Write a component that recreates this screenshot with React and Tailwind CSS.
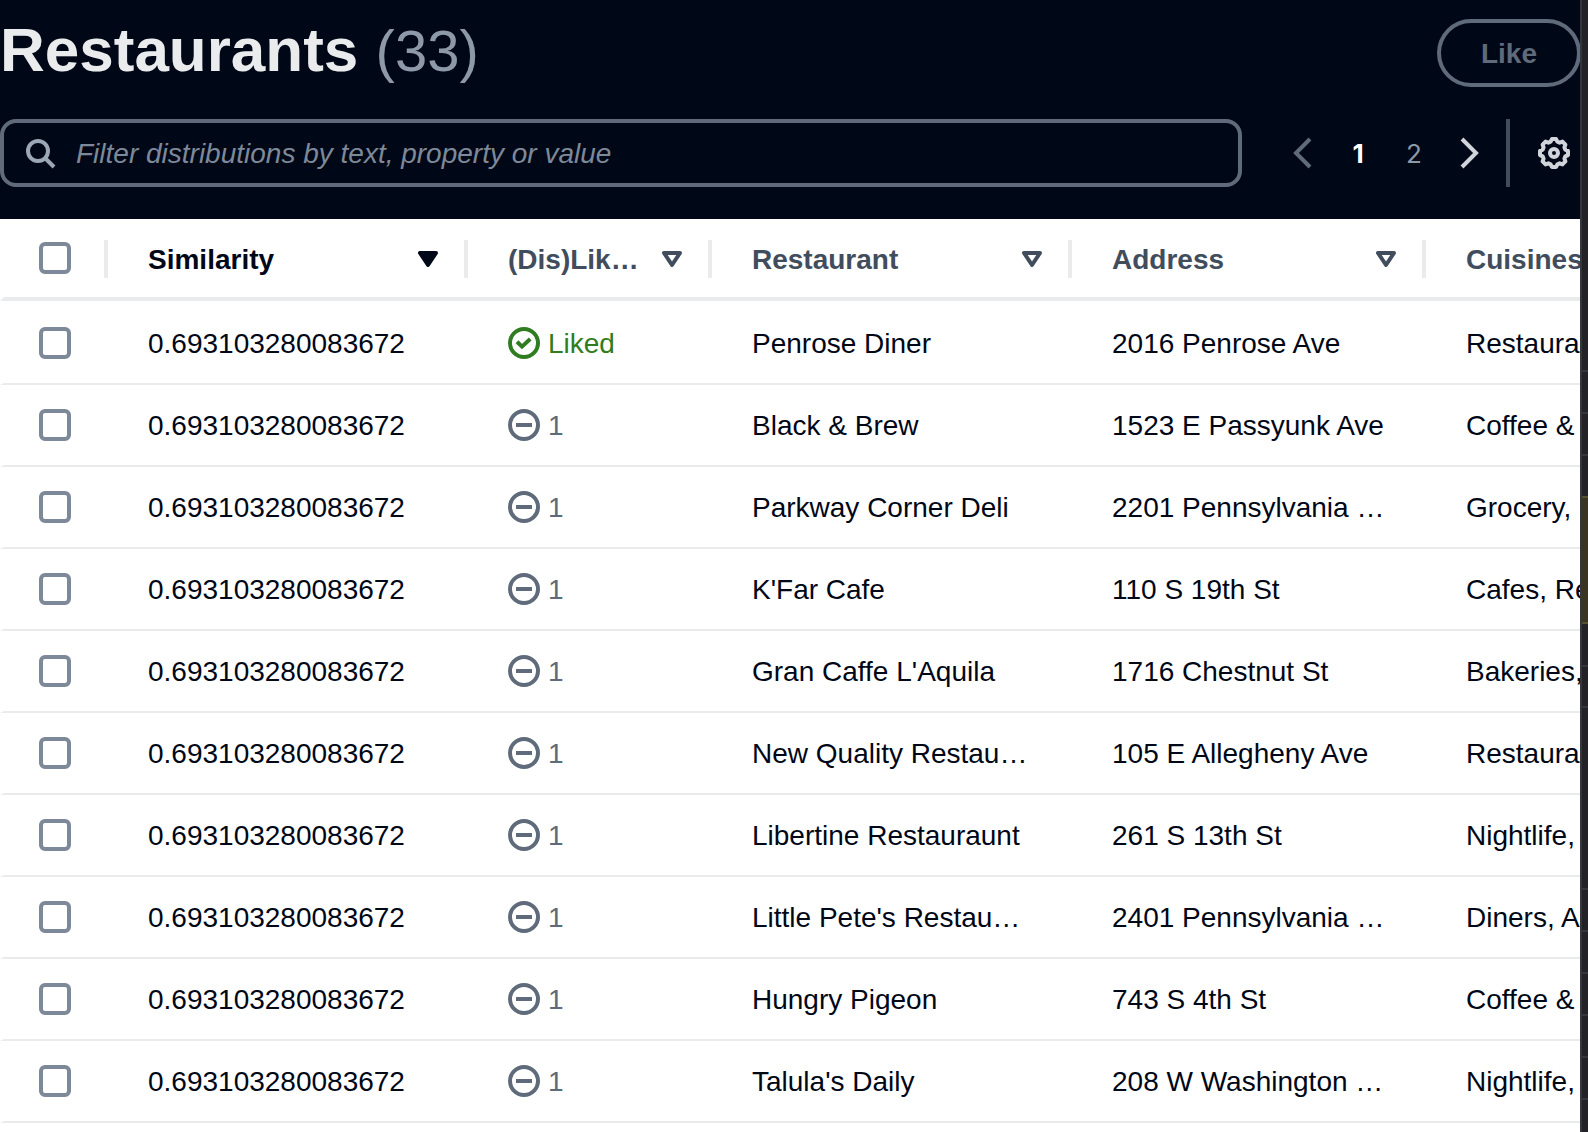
const SANS = "font-['Liberation_Sans',Arial,sans-serif]";

const columns = [
  { label: "Similarity", active: true },
  { label: "(Dis)Lik…" },
  { label: "Restaurant" },
  { label: "Address" },
];

const SCORE = "0.693103280083672";

const rows = [
  { liked: true, name: "Penrose Diner", address: "2016 Penrose Ave", cuisines: "Restaurants" },
  { name: "Black & Brew", address: "1523 E Passyunk Ave", cuisines: "Coffee &" },
  { name: "Parkway Corner Deli", address: "2201 Pennsylvania …", cuisines: "Grocery," },
  { name: "K'Far Cafe", address: "110 S 19th St", cuisines: "Cafes, Res" },
  { name: "Gran Caffe L'Aquila", address: "1716 Chestnut St", cuisines: "Bakeries," },
  { name: "New Quality Restau…", address: "105 E Allegheny Ave", cuisines: "Restaurants" },
  { name: "Libertine Restauraunt", address: "261 S 13th St", cuisines: "Nightlife," },
  { name: "Little Pete's Restau…", address: "2401 Pennsylvania …", cuisines: "Diners, A" },
  { name: "Hungry Pigeon", address: "743 S 4th St", cuisines: "Coffee &" },
  { name: "Talula's Daily", address: "208 W Washington …", cuisines: "Nightlife," },
];

function Icon({ children, className = "" }) {
  return (
    <svg
      viewBox="0 0 16 16"
      fill="none"
      stroke="currentColor"
      strokeWidth="2"
      aria-hidden="true"
      className={`size-8 shrink-0 ${className}`}
    >
      {children}
    </svg>
  );
}

function Checkbox({ label }) {
  return (
    <input
      type="checkbox"
      aria-label={label}
      className="block size-8 appearance-none rounded-md border-4 border-[#7d8998] bg-white checked:bg-[#7d8998]"
    />
  );
}

function SortIcon({ filled }) {
  return (
    <Icon>
      <path d="M4 5h8l-4 6-4-6z" strokeLinejoin="round" fill={filled ? "currentColor" : "none"} />
    </Icon>
  );
}

function Status({ liked }) {
  return liked ? (
    <span className="flex items-center gap-2 text-[#2f7d20]">
      <Icon>
        <circle cx="8" cy="8" r="7" />
        <path d="m4.5 7.4 2.5 2.4 4.1-3.8" />
      </Icon>
      <span className="pt-0.5">Liked</span>
    </span>
  ) : (
    <span className="flex items-center gap-2 text-[#5f6b7a]">
      <Icon>
        <circle cx="8" cy="8" r="7" />
        <path d="M4 8h8" />
      </Icon>
      <span className="pt-0.5">1</span>
    </span>
  );
}

function Header() {
  return (
    <header className="pt-[19px] pb-8">
      <div className="flex items-start justify-between">
        <h1 className="text-[62px] leading-[62px] font-bold text-[#e9ebed]">
          Restaurants <span className="text-[58px] font-normal text-[#8d99a8]">(33)</span>
        </h1>
        <button
          type="button"
          disabled
          className="-mr-px h-[68px] rounded-full border-4 border-[#5f6b7a] px-10 pt-0.5 font-bold text-[#5f6b7a]"
        >
          Like
        </button>
      </div>
      <div className="mt-8 flex h-[68px] items-center">
        <label className="flex h-full min-w-0 flex-1 items-center gap-5 rounded-2xl border-4 border-[#5f6b7a] px-5 text-[#9ba7b6]">
          <Icon>
            <circle cx="7" cy="7" r="5" />
            <path d="m10.5 10.5 4.5 4.5" />
          </Icon>
          <input
            type="text"
            aria-label="Filter distributions"
            placeholder="Filter distributions by text, property or value"
            className="min-w-0 flex-1 bg-transparent pt-0.5 text-[#e9ebed] outline-none placeholder:text-[#7d8998] placeholder:italic"
          />
        </label>
        <nav
          aria-label="Pagination"
          className="ml-11 flex items-center font-['Inter',sans-serif] text-[26px]"
        >
          <button type="button" aria-label="Previous page" disabled className="text-[#5f6b7a]">
            <Icon>
              <path d="M12 1 5 8l7 7" />
            </Icon>
          </button>
          <button type="button" aria-current="page" className="ml-3 w-14 pt-0.5 font-bold text-white">
            1
          </button>
          <button type="button" className="w-14 pt-0.5 text-[#8d99a8]">
            2
          </button>
          <button type="button" aria-label="Next page" className="ml-3 text-[#d1d5db]">
            <Icon>
              <path d="m4 1 7 7-7 7" />
            </Icon>
          </button>
        </nav>
        <div className="ml-5 h-full border-l-4 border-[#414d5c]" />
        <button type="button" aria-label="Preferences" className="mr-[10px] ml-7 text-[#d1d5db]">
          <Icon>
            <path
              strokeLinejoin="round"
              d="M6.95 1h2.1l.63 1.34 1.14.47 1.4-.52 1.49 1.49-.52 1.4.47 1.14L15 6.95v2.1l-1.34.63-.47 1.14.52 1.4-1.49 1.49-1.4-.52-1.14.47L9.05 15h-2.1l-.63-1.34-1.14-.47-1.4.52-1.49-1.49.52-1.4-.47-1.14L1 9.05v-2.1l1.34-.63.47-1.14-.52-1.4 1.49-1.49 1.4.52 1.14-.47z"
            />
            <circle cx="8" cy="8" r="2" />
          </Icon>
        </button>
      </div>
    </header>
  );
}

function RestaurantTable() {
  return (
    <table className="w-full table-fixed border-separate border-spacing-0 bg-white text-left whitespace-nowrap text-[#000716]">
      <colgroup>
        <col className="w-[108px]" />
        <col className="w-[360px]" />
        <col className="w-[244px]" />
        <col className="w-[360px]" />
        <col className="w-[354px]" />
        <col />
      </colgroup>
      <thead>
        <tr className="h-[82px]">
          <th className="border-b-4 border-l-4 border-b-[#e9ebed] border-l-transparent p-0 pt-0.5">
            <div className="flex h-[38px] items-center border-r-4 border-[#e9ebed] pb-0.5 pl-[35px]">
              <Checkbox label="Select all restaurants" />
            </div>
          </th>
          {columns.map((column) => (
            <th key={column.label} className="border-b-4 border-[#e9ebed] p-0 pt-0.5">
              <div className="flex h-[38px] items-center border-r-4 border-[#e9ebed] pr-5 pl-10">
                <button
                  type="button"
                  className={`flex flex-1 items-center justify-between font-bold ${
                    column.active ? "text-[#000716]" : "text-[#414d5c]"
                  }`}
                >
                  <span className="pt-0.5">{column.label}</span>
                  <SortIcon filled={column.active} />
                </button>
              </div>
            </th>
          ))}
          <th className="overflow-hidden border-b-4 border-[#e9ebed] p-0 pt-1 pl-10 font-bold text-[#414d5c]">
            Cuisines
          </th>
        </tr>
      </thead>
      <tbody className="before:block before:h-0.5">
        {rows.map((row) => (
          <tr
            key={row.name}
            className="h-[82px] *:border-b-2 *:border-b-[#e9ebed] *:p-0 *:pt-0.5 *:pl-10"
          >
            <td className="border-l-4 border-l-transparent pt-0! pl-[35px]!">
              <Checkbox label={`Select ${row.name}`} />
            </td>
            <td>{SCORE}</td>
            <td className="pt-0!">
              <Status liked={row.liked} />
            </td>
            <td>{row.name}</td>
            <td>{row.address}</td>
            <td className="overflow-hidden">{row.cuisines}</td>
          </tr>
        ))}
      </tbody>
    </table>
  );
}

function EdgePanel() {
  return (
    <aside className="w-2 shrink-0 border-l-2 border-[#35363b] bg-[#232327] *:border-[#35363b]">
      <div className="h-[372px] border-b-2" />
      <div className="h-[42px] border-b-2" />
      <div className="h-[42px] border-b-2" />
      <div className="h-10" />
      <div className="h-32 border-y-2 border-[#55522f]! bg-[#3c3423]" />
      <div className="h-[43px] border-b-2" />
      <div className="h-[41px] border-b-2" />
      <div className="h-[182px] border-b-2" />
      <div className="h-[42px] border-b-2" />
      <div className="h-[42px] border-b-2" />
      <div className="h-[42px] border-b-2" />
      <div className="h-[42px] border-b-2" />
      <div className="h-[42px] border-b-2" />
    </aside>
  );
}

export default function App() {
  return (
    <div className={`flex h-screen overflow-hidden bg-white text-[28px] leading-10 ${SANS}`}>
      <main className="min-w-0 flex-1 overflow-hidden">
        <div className="bg-[#000716]">
          <Header />
        </div>
        <RestaurantTable />
      </main>
      <EdgePanel />
    </div>
  );
}
